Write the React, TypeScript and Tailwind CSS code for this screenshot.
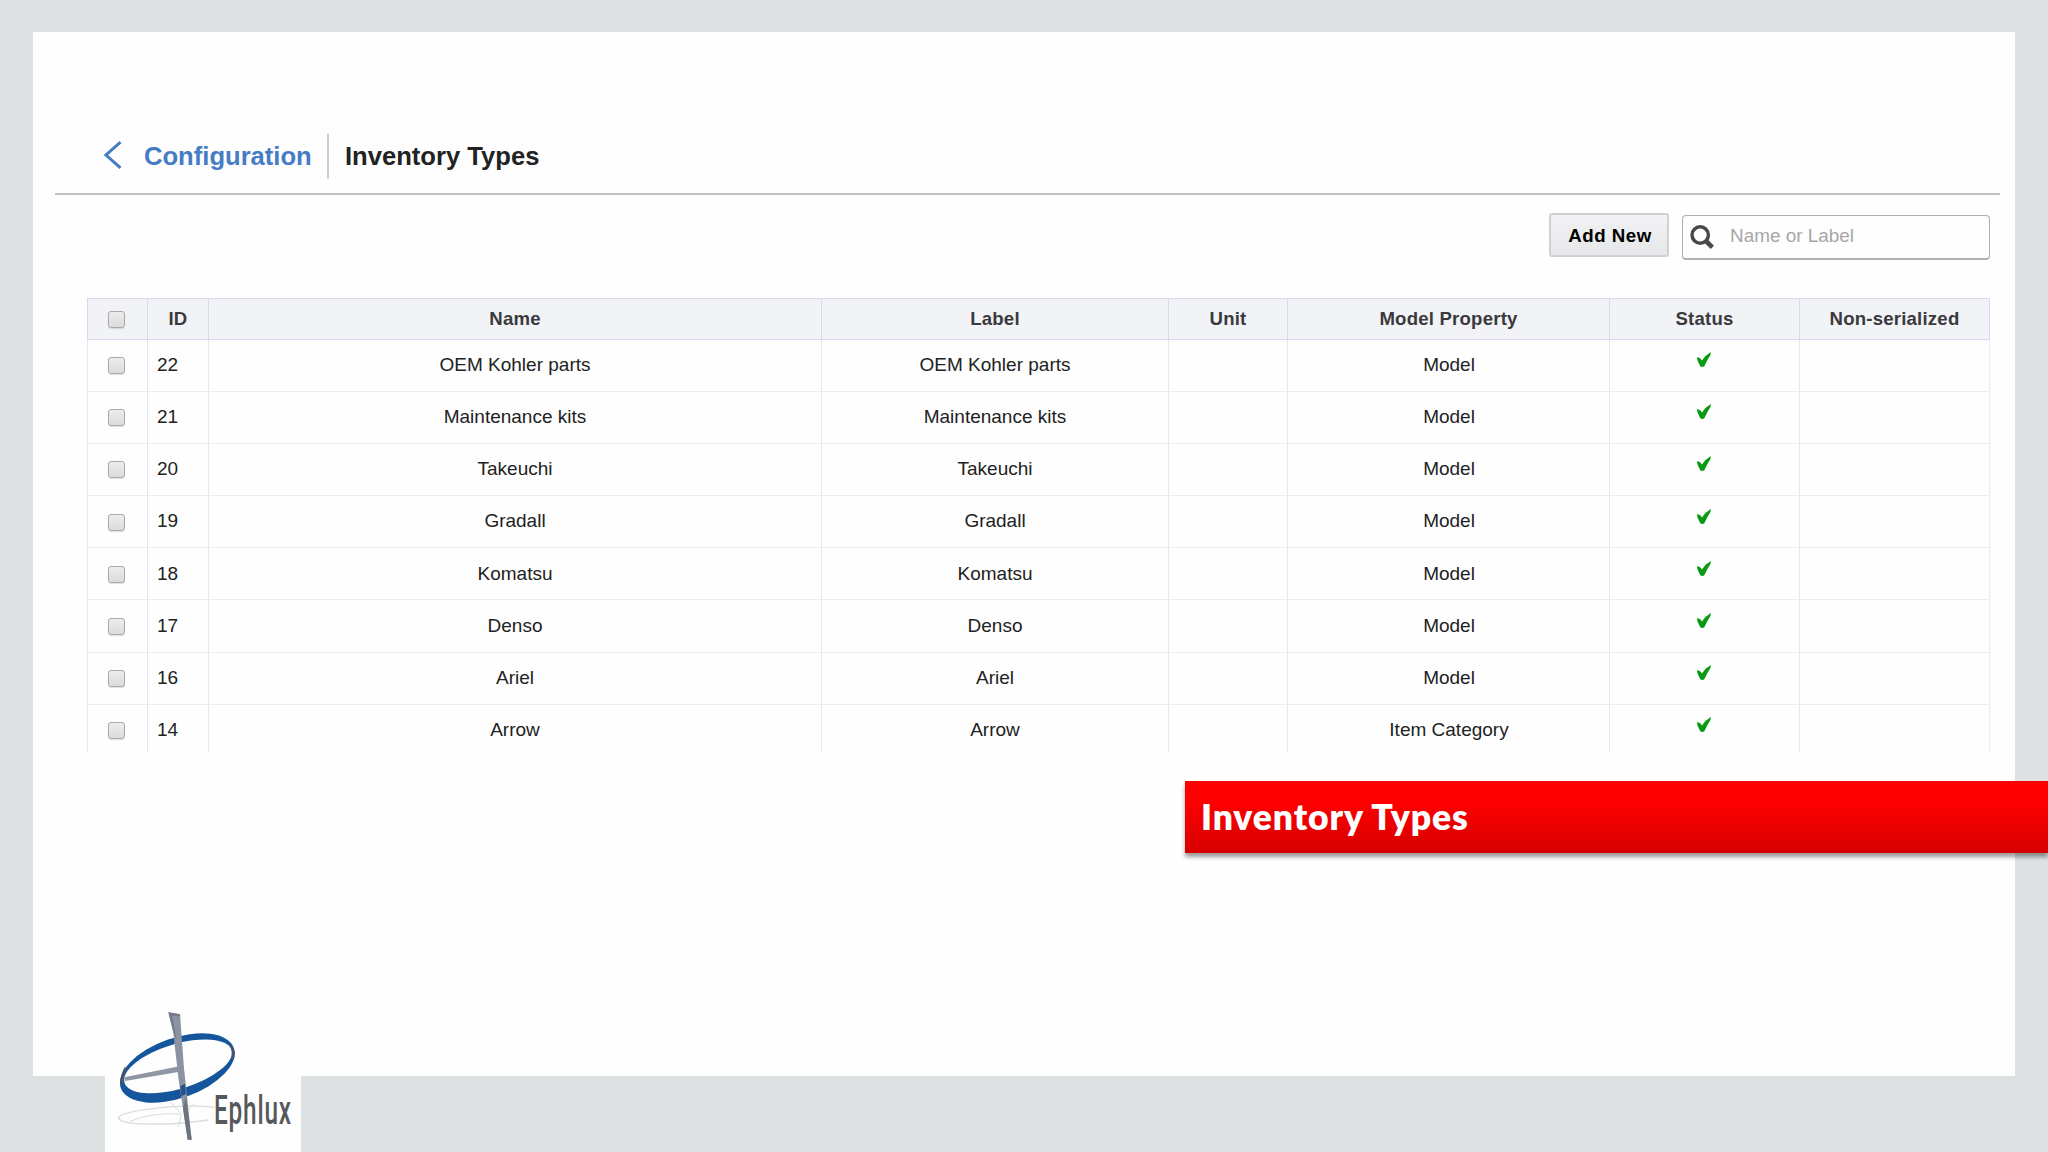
import { clsx } from 'clsx';

interface InventoryType {
  id: number;
  name: string;
  property: string;
}

const rows: InventoryType[] = [
  { id: 22, name: 'OEM Kohler parts', property: 'Model' },
  { id: 21, name: 'Maintenance kits', property: 'Model' },
  { id: 20, name: 'Takeuchi', property: 'Model' },
  { id: 19, name: 'Gradall', property: 'Model' },
  { id: 18, name: 'Komatsu', property: 'Model' },
  { id: 17, name: 'Denso', property: 'Model' },
  { id: 16, name: 'Ariel', property: 'Model' },
  { id: 14, name: 'Arrow', property: 'Item Category' },
];

const headers = ['Name', 'Label', 'Unit', 'Model Property', 'Status', 'Non-serialized'];

const columns = 'grid grid-cols-[60px_61px_613px_347px_119px_322px_190px_190px]';

function Checkbox() {
  return (
    <span
      role="checkbox"
      aria-checked="false"
      className="mr-[3px] mt-px block size-[17px] rounded-[3px] border-[1.5px] border-[#a9a9ab] bg-linear-to-b from-[#ececec] to-[#dcdcdc] shadow-[0_1px_1px_rgba(0,0,0,0.12)]"
    />
  );
}

function CheckMark() {
  return (
    <svg viewBox="0 0 40 44" className="mb-[11px] mr-[2px] h-[15px] w-[14px]">
      <path d="M0 15 L9 18 L14 25 Q24 9 40 0 L39 9 Q29 24 21 42 Q15 46 9 42 Q4 32 0 22 Z" fill="#0b9a12" />
    </svg>
  );
}

function Logo() {
  return (
    <svg viewBox="75 60 588 456" className="h-[152px] w-[196px]">
      <g fill="none" stroke="#d9dbdc" strokeWidth="4">
        <path d="M385 420 Q270 438 160 430 Q112 424 116 412 Q130 392 280 380 Q350 374 405 382" />
        <path d="M150 424 Q220 396 300 402 M270 365 L304 400 L296 440 M345 370 L312 402" strokeWidth="3" />
      </g>
      <ellipse cx="292" cy="264" rx="180" ry="90" transform="rotate(-19.5 292 264)" fill="#14559b" />
      <ellipse cx="294" cy="259" rx="168" ry="67" transform="rotate(-17 294 259)" fill="#fefefe" />
      <path d="M134 262 Q120 285 121 314 L131 310 Q129 290 143 265 Z M452 192 Q468 210 462 238 L454 238 Q460 212 447 194 Z" fill="#46536a" />
      <path d="M133 292 L298 259 L300 275 L135 303 Z" fill="#8f97a5" />
      <path d="M265 97 L300 103 L312 265 L335 479 L323 479 L296 300 L280 160 Z" fill="#8b92a1" />
      <path d="M265 97 L300 103 L301 109 L276 107 L290 180 L282 160 Z" fill="#75798a" />
      <path d="M301 318 L315 312 L318 342 L304 349 Z" fill="#255389" />
      <path d="M318 352 L335 479 L323 479 L309 385 Z" fill="#6d737d" />
      <text
        transform="translate(402 431) scale(0.6 1)"
        fill="#57585c"
        className="font-[Roboto,sans-serif] text-[122px] font-medium tracking-[4px]"
      >
        Ephlux
      </text>
    </svg>
  );
}

function TopBar() {
  return (
    <header className="ml-[22px] mr-[15px] flex h-[163px] items-end border-b-2 border-[#c2c1c6] pb-[14px] text-[25.6px] font-bold">
      <svg viewBox="0 0 18 28" className="mb-[10px] ml-[49px] h-7 w-[18px]" fill="none" stroke="#447cc4" strokeWidth="3">
        <path d="M16.5 1.2 L2 14 L16.5 26.8" />
      </svg>
      <a className="ml-[22px] mb-[4px] w-[168px] whitespace-nowrap text-[#467cc6]">Configuration</a>
      <span className="ml-[15px] h-[45px] w-[1.5px] bg-[#cfcfd2]" />
      <h1 className="mb-[4px] ml-[16.5px] text-[#222222]">Inventory Types</h1>
    </header>
  );
}

function Toolbar() {
  return (
    <div className="mr-[25px] mt-[18px] flex h-[47px] justify-end gap-[13px]">
      <button className="h-[44px] w-[120px] rounded-[3px] border-2 border-[#d0d1d5] bg-linear-to-b from-[#f2f2f5] to-[#e6e7e8] pt-[2px] pl-[2px] text-[18.7px] font-bold tracking-[0.5px] text-black">
        Add New
      </button>
      <div className="mt-[2px] flex h-[45px] w-[308px] items-center rounded-[4px] border-[1.5px] border-b-2 border-[#b0afb5] bg-[#fefefe]">
        <svg viewBox="0 0 24 24" className="ml-[7px] size-[24px]" fill="none" stroke="#48484a">
          <circle cx="10.2" cy="10" r="8.2" strokeWidth="3.4" />
          <path d="M16 16 L22.3 22.3" strokeWidth="4.6" />
        </svg>
        <span className="ml-[16px] mb-[2px] text-[18.9px] text-[#a6a6a8]">Name or Label</span>
      </div>
    </div>
  );
}

function InventoryTable() {
  return (
    <div className="ml-[54px] mt-[38px] h-[454px] w-[1903px] overflow-hidden">
      <div className={clsx(columns, 'h-[41.5px] border-y-[1.5px] border-r border-[#d8d9f0] bg-[#f2f3f7] text-[18.6px] font-bold tracking-[0.2px] text-[#3a3a3d]')}>
        <div className="flex items-center justify-center border-l border-[#d8d9f0]">
          <Checkbox />
        </div>
        <div className="flex items-center justify-center border-l border-[#d8d9f0]">ID</div>
        {headers.map((header) => (
          <div key={header} className="flex items-center justify-center border-l border-[#d8d9f0]">
            {header}
          </div>
        ))}
      </div>
      {rows.map((row) => (
        <div
          key={row.id}
          className={clsx(
            columns,
            'h-[52.2px] border-b-[1.5px] border-r border-[#ececf1] text-[19px] text-[#222222]',
            '*:flex *:items-center *:justify-center *:border-l *:border-[#e6e6ee]',
          )}
        >
          <div>
            <Checkbox />
          </div>
          <div>
            <span className="w-full pl-[9px]">{row.id}</span>
          </div>
          <div>{row.name}</div>
          <div>{row.name}</div>
          <div />
          <div className="pl-px">{row.property}</div>
          <div>
            <CheckMark />
          </div>
          <div />
        </div>
      ))}
    </div>
  );
}

export default function App() {
  return (
    <div className="relative h-[1152px] w-[2048px] overflow-hidden bg-[#dde1e1] pl-[33px] pt-[32px] font-['Liberation_Sans',Arial,sans-serif]">
      <main className="h-[1044px] w-[1982px] bg-[#fefefe]">
        <TopBar />
        <Toolbar />
        <InventoryTable />
      </main>
      {/* Caption ribbon runs over the right edge of the slide */}
      <div className="absolute right-0 top-[781px] flex h-[72px] w-[863px] items-center bg-linear-to-b from-[#ff0000] from-25% to-[#d60000] pl-[16px] font-[Lato,sans-serif] text-[35.5px] font-extrabold tracking-[0.9px] text-white shadow-[0_4px_4px_rgba(0,0,0,0.38)]">
        Inventory Types
      </div>
      <div className="absolute left-[105px] top-[1000px] bg-[#fefefe]">
        <Logo />
      </div>
    </div>
  );
}
